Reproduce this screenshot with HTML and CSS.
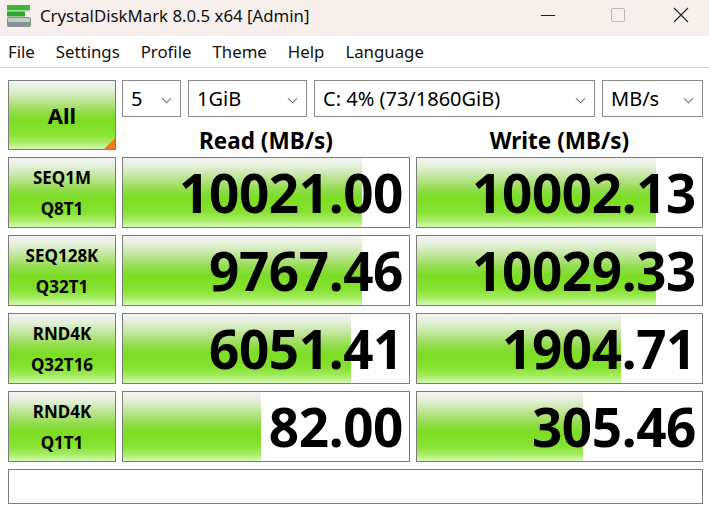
FILE: index.html
```html
<!DOCTYPE html>
<html lang="en">
<head>
    <meta charset="UTF-8">
    <title>CrystalDiskMark 8.0.5 x64 [Admin]</title>
    <link rel="stylesheet" href="styles.css">
</head>
<body>
    <!-- Barra de título -->
    <div class="titlebar">
        <svg class="app-icon" width="26" height="24" viewBox="0 0 26 24">
            <rect x="1" y="1" width="23" height="5" fill="#3cb83c"/>
            <rect x="1" y="6" width="23" height="1.5" fill="#9ee09e"/>
            <rect x="1" y="7.5" width="18" height="5" fill="#2fa82f"/>
            <rect x="1" y="13" width="24" height="10" rx="2" fill="#8a9096"/>
            <rect x="2" y="14" width="22" height="4" rx="1" fill="#c4c9cd"/>
            <rect x="19" y="18.5" width="3" height="3" fill="#3cc83c"/>
        </svg>
        <span class="title">CrystalDiskMark 8.0.5 x64 [Admin]</span>
        <div class="win-controls">
            <span class="win-btn"><svg width="14" height="14" viewBox="0 0 14 14"><line x1="0" y1="7.5" x2="14" y2="7.5" stroke="#222" stroke-width="1"/></svg></span>
            <span class="win-btn"><svg width="14" height="14" viewBox="0 0 14 14"><rect x="0.5" y="0.5" width="13" height="13" rx="1.5" fill="none" stroke="#bbb" stroke-width="1"/></svg></span>
            <span class="win-btn last"><svg width="16" height="16" viewBox="0 0 16 16"><path d="M1 1 L15 15 M15 1 L1 15" stroke="#222" stroke-width="1.1"/></svg></span>
        </div>
    </div>

    <!-- Menu -->
    <div class="menubar">
        <span>File</span>
        <span>Settings</span>
        <span>Profile</span>
        <span>Theme</span>
        <span>Help</span>
        <span>Language</span>
    </div>

    <div class="main">
        <div class="board">
            <div class="btn-all green">All<span class="corner"></span></div>

            <div class="combos">
                <div class="combo c-count">5<span class="chev"></span></div>
                <div class="combo c-size">1GiB<span class="chev"></span></div>
                <div class="combo c-drive">C: 4% (73/1860GiB)<span class="chev"></span></div>
                <div class="combo c-unit">MB/s<span class="chev"></span></div>
            </div>

            <div class="col-head">Read (MB/s)</div>
            <div class="col-head">Write (MB/s)</div>

            <div class="label green">SEQ1M<br>Q8T1</div>
            <div class="value"><div class="fill" style="width: 83.6%"></div><span>10021.00</span></div>
            <div class="value"><div class="fill" style="width: 84%"></div><span>10002.13</span></div>

            <div class="label green">SEQ128K<br>Q32T1</div>
            <div class="value"><div class="fill" style="width: 83.6%"></div><span>9767.46</span></div>
            <div class="value"><div class="fill" style="width: 84%"></div><span>10029.33</span></div>

            <div class="label green">RND4K<br>Q32T16</div>
            <div class="value"><div class="fill" style="width: 79.7%"></div><span>6051.41</span></div>
            <div class="value"><div class="fill" style="width: 71.5%"></div><span>1904.71</span></div>

            <div class="label green">RND4K<br>Q1T1</div>
            <div class="value"><div class="fill" style="width: 48.3%"></div><span>82.00</span></div>
            <div class="value"><div class="fill" style="width: 58.2%"></div><span>305.46</span></div>
        </div>

        <div class="comment"></div>
    </div>
</body>
</html>
```

FILE: styles.css
```css
* {
    margin: 0;
    padding: 0;
    box-sizing: border-box;
}

body {
    font-family: "Noto Sans", "Open Sans", sans-serif;
    background-color: #ffffff;
    color: #000;
    width: 709px;
    height: 510px;
    overflow: hidden;
}

/* barra de título */
.titlebar {
    height: 36px;
    background-color: #f6efeb;
    display: flex;
    align-items: center;
    padding-left: 6px;
}

.app-icon {
    margin-top: -4px;
}

.title {
    font-size: 16.8px;
    margin-left: 8px;
    margin-top: -6px;
    color: #111;
}

.win-controls {
    margin-left: auto;
    display: flex;
    margin-top: -6px;
}

.win-btn {
    width: 70px;
    display: flex;
    justify-content: center;
    align-items: center;
}

.win-btn.last {
    width: 56px;
}

/* menu */
.menubar {
    height: 32px;
    display: flex;
    align-items: center;
    padding-left: 8px;
    border-bottom: 1px solid #cfcfcf;
    font-size: 16.8px;
    color: #111;
}

.menubar span {
    margin-right: 21px;
}

/* área principal */
.main {
    padding: 12px 6px 0 8px;
}

.board {
    display: grid;
    grid-template-columns: 108px 288px 287px;
    grid-template-rows: 37px 26px 71px 71px 71px 71px;
    column-gap: 6px;
    row-gap: 7px;
}

.green {
    background: linear-gradient(to bottom,
        #f3f4f1 0%,
        #e4efda 12%,
        #b6e287 32%,
        #90dc4a 46%,
        #7ddc23 58%,
        #86e230 78%,
        #a6ec62 90%,
        #d6f8b8 100%);
    border: 1px solid #7d7d7d;
}

.btn-all {
    grid-row: 1 / span 2;
    position: relative;
    display: flex;
    justify-content: center;
    align-items: center;
    font-weight: bold;
    font-size: 22px;
}

.corner {
    position: absolute;
    right: 0;
    bottom: 0;
    width: 0;
    height: 0;
    border-left: 11px solid transparent;
    border-bottom: 11px solid #f07a1c;
}

.combos {
    grid-column: 2 / span 2;
    display: flex;
    gap: 7px;
}

.combo {
    border: 1px solid #8a8a8a;
    height: 37px;
    display: flex;
    align-items: center;
    padding-left: 8px;
    font-size: 20px;
    position: relative;
}

.chev {
    position: absolute;
    right: 10px;
    top: 14px;
    width: 7px;
    height: 7px;
    border-right: 1px solid #777;
    border-bottom: 1px solid #777;
    transform: rotate(45deg);
}

.c-count { width: 59px; }
.c-size { width: 119px; }
.c-drive { width: 281px; }
.c-unit { width: 101px; }

.col-head {
    font-weight: bold;
    font-size: 22.5px;
    text-align: center;
    line-height: 26px;
    padding-top: 4px;
}

.label {
    display: flex;
    flex-direction: column;
    justify-content: center;
    text-align: center;
    font-weight: bold;
    font-size: 17px;
    line-height: 31px;
}

.value {
    border: 1px solid #7d7d7d;
    position: relative;
    background-color: #fff;
    display: flex;
    justify-content: flex-end;
    align-items: center;
    padding-right: 6px;
}

.value .fill {
    position: absolute;
    left: 0;
    top: 0;
    bottom: 0;
    background: linear-gradient(to bottom,
        #f3f4f1 0%,
        #e4efda 12%,
        #b6e287 32%,
        #90dc4a 46%,
        #7ddc23 58%,
        #86e230 78%,
        #a6ec62 90%,
        #d6f8b8 100%);
}

.value span {
    position: relative;
    font-weight: bold;
    font-size: 53px;
    line-height: 1;
    letter-spacing: -0.4px;
}

.comment {
    margin-top: 7px;
    height: 35px;
    border: 1px solid #7d7d7d;
    width: 695px;
}
```
